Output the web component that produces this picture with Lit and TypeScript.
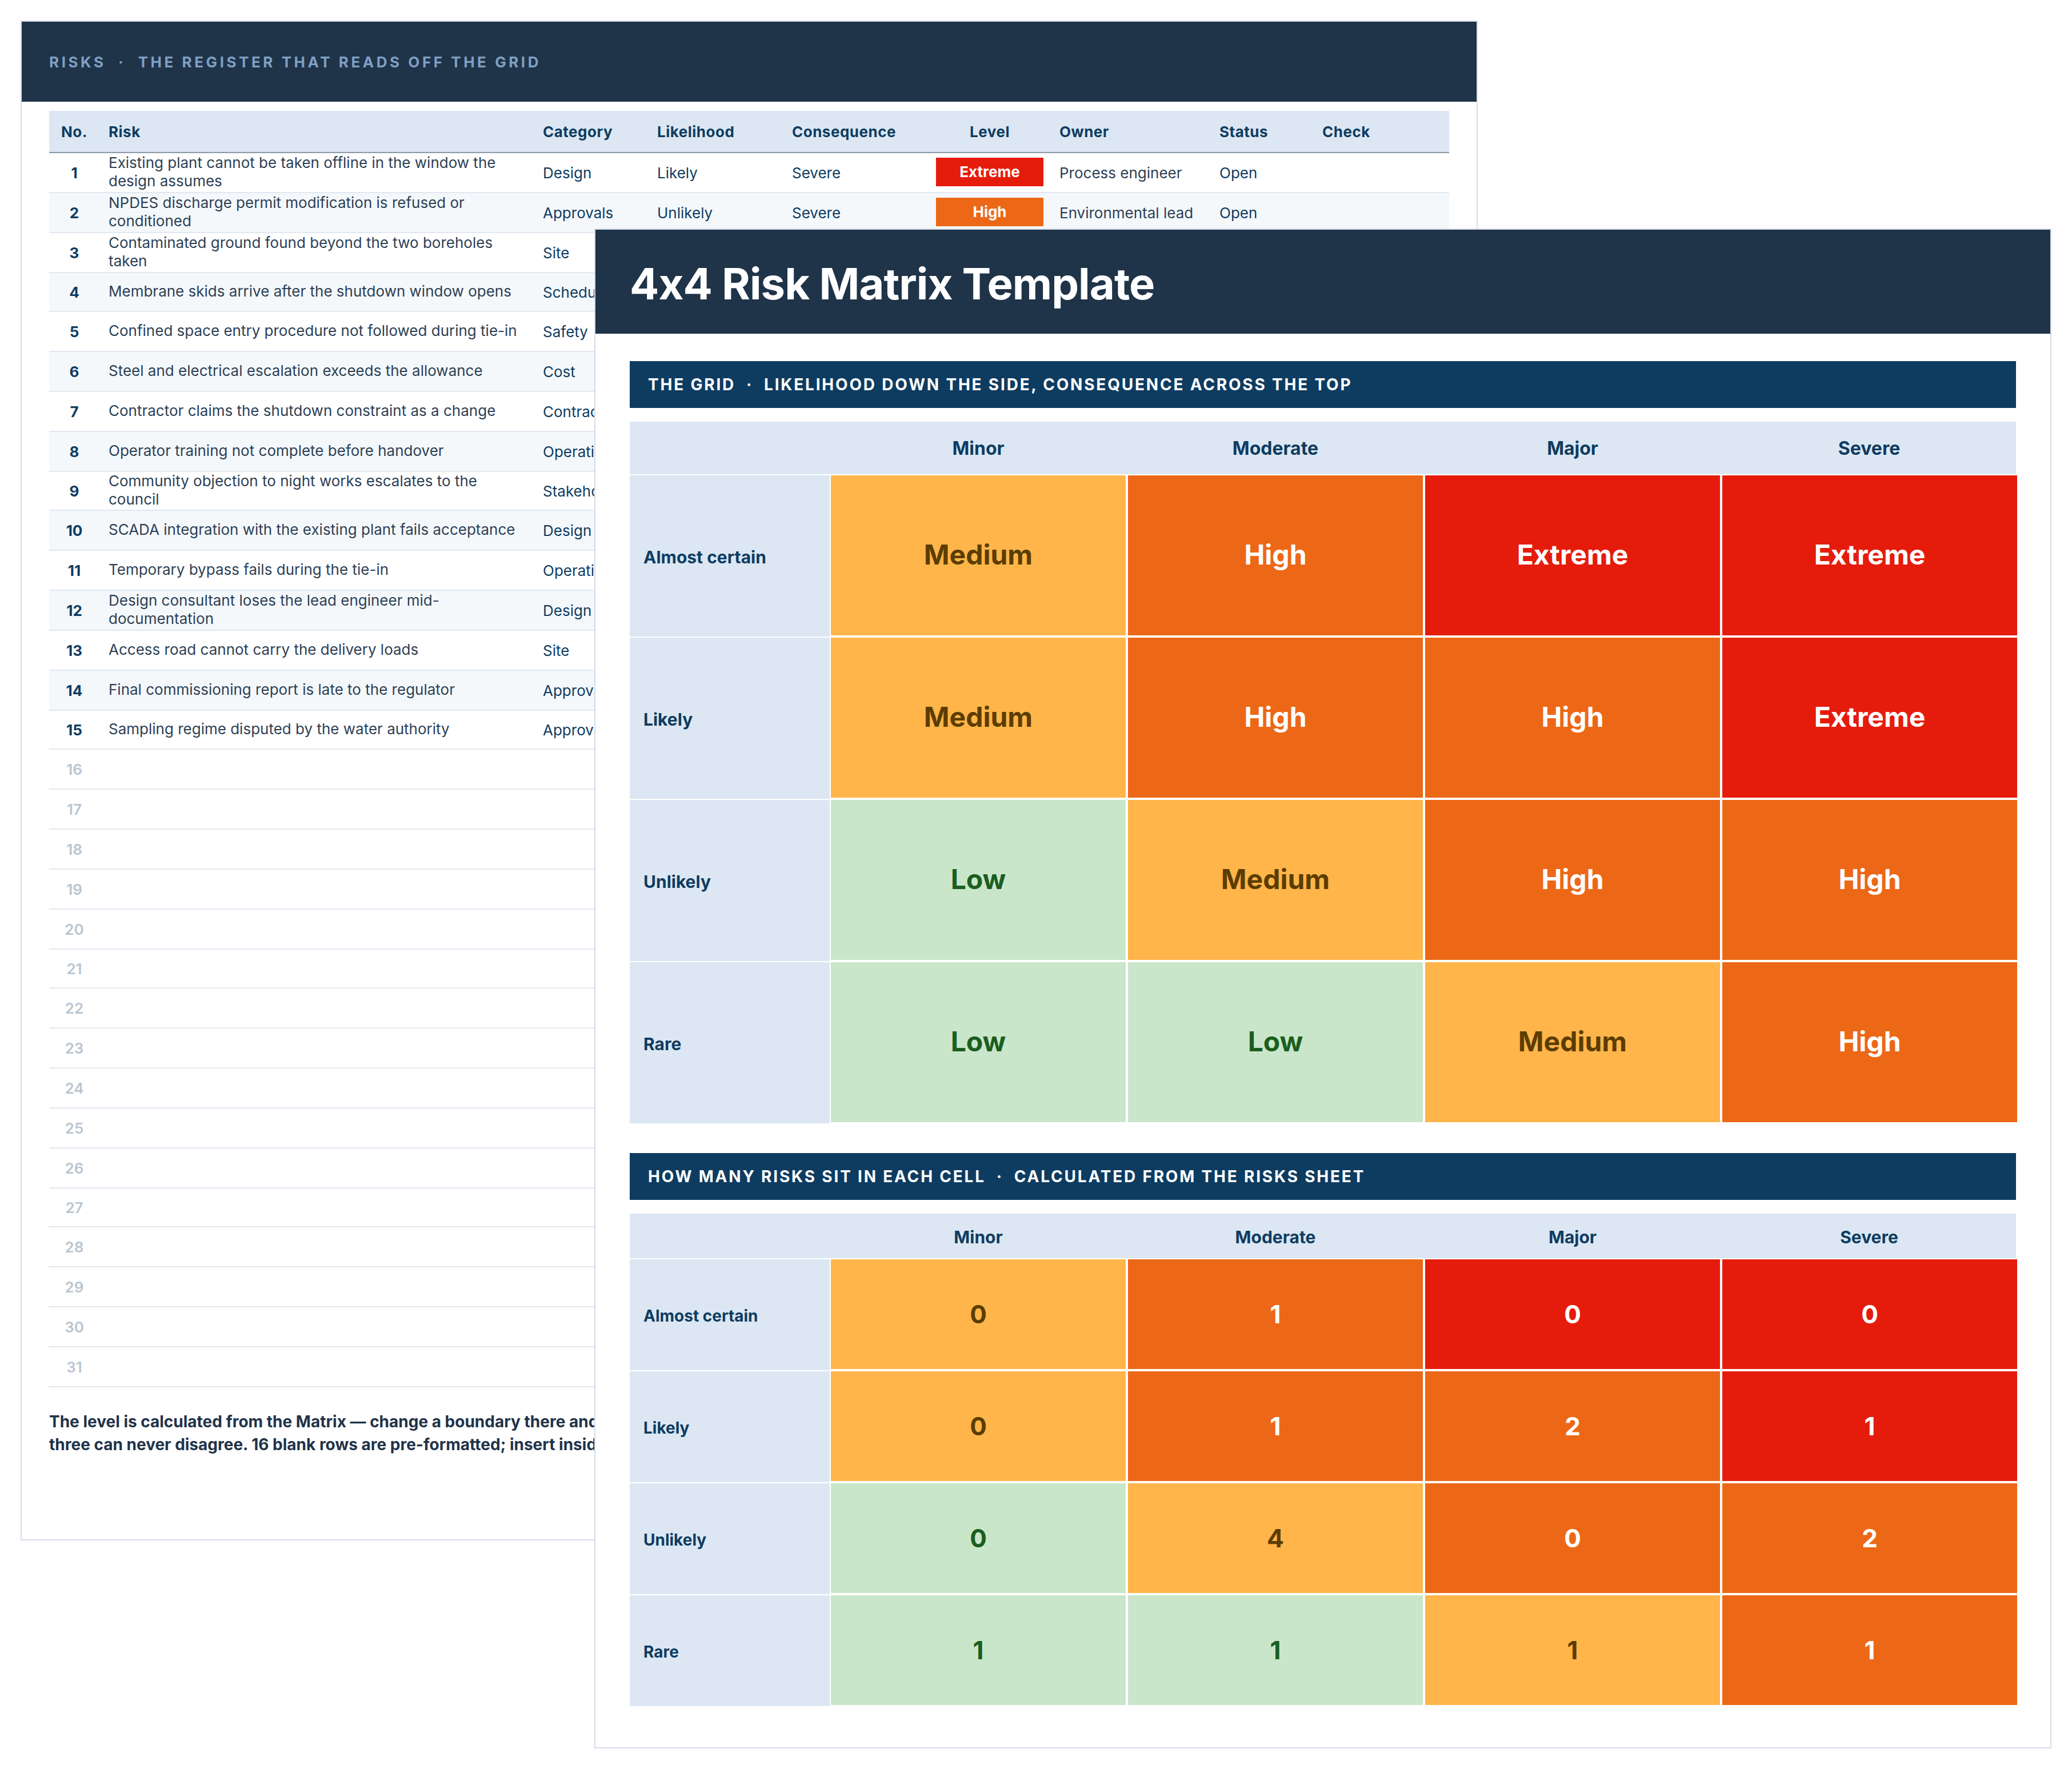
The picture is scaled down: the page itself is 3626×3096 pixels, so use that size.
import { LitElement, html, css } from "lit";
import { customElement } from "lit/decorators.js";

type Level = "Low" | "Medium" | "High" | "Extreme";

const LIKELIHOOD = ["Almost certain", "Likely", "Unlikely", "Rare"];
const CONSEQUENCE = ["Minor", "Moderate", "Major", "Severe"];

const MATRIX: Level[][] = [
  ["Medium", "High", "Extreme", "Extreme"],
  ["Medium", "High", "High", "Extreme"],
  ["Low", "Medium", "High", "High"],
  ["Low", "Low", "Medium", "High"],
];

// risk, category, likelihood, consequence, owner
const RISKS: [string, string, string, string, string][] = [
  ["Existing plant cannot be taken offline in the window the design assumes", "Design", "Likely", "Severe", "Process engineer"],
  ["NPDES discharge permit modification is refused or conditioned", "Approvals", "Unlikely", "Severe", "Environmental lead"],
  ["Contaminated ground found beyond the two boreholes taken", "Site", "Likely", "Major", "Geotechnical lead"],
  ["Membrane skids arrive after the shutdown window opens", "Schedule", "Likely", "Moderate", "Procurement lead"],
  ["Confined space entry procedure not followed during tie-in", "Safety", "Rare", "Severe", "Site manager"],
  ["Steel and electrical escalation exceeds the allowance", "Cost", "Likely", "Major", "Cost manager"],
  ["Contractor claims the shutdown constraint as a change", "Contract", "Unlikely", "Moderate", "Contract manager"],
  ["Operator training not complete before handover", "Operations", "Unlikely", "Moderate", "Plant manager"],
  ["Community objection to night works escalates to the council", "Stakeholder", "Rare", "Major", "Community lead"],
  ["SCADA integration with the existing plant fails acceptance", "Design", "Unlikely", "Severe", "Controls engineer"],
  ["Temporary bypass fails during the tie-in", "Operations", "Almost certain", "Moderate", "Process engineer"],
  ["Design consultant loses the lead engineer mid-documentation", "Design", "Rare", "Moderate", "Design manager"],
  ["Access road cannot carry the delivery loads", "Site", "Unlikely", "Moderate", "Site manager"],
  ["Final commissioning report is late to the regulator", "Approvals", "Unlikely", "Moderate", "Environmental lead"],
  ["Sampling regime disputed by the water authority", "Approvals", "Rare", "Minor", "Environmental lead"],
];

const TOTAL_ROWS = 31;
// from row 3 down the matrix sheet covers everything right of the category
const UNCOVERED_ROWS = 2;
const COLUMNS = ["Category", "Likelihood", "Consequence", "Level", "Owner", "Status", "Check"];

const levelOf = (likelihood: string, consequence: string) =>
  MATRIX[LIKELIHOOD.indexOf(likelihood)][CONSEQUENCE.indexOf(consequence)];

// rows snap to even pixels, so they come out as 70 or 68
const rowBottom = (n: number) => Math.round((n * 69.655 + 0.1) / 2) * 2;

@customElement("app-root")
export class AppRoot extends LitElement {
  static override styles = css`
    :host {
      display: block;
      position: relative;
      box-sizing: border-box;
      height: 3096px;
      padding: 36px;
      background: #fff;
      font-family: Inter, "Liberation Sans", sans-serif;
      color: #1f3349;
    }

    .sheet {
      box-sizing: border-box;
      width: 2550px;
      border: 2px solid #d6dce7;
      background: #fff;
    }

    .sheet.matrix {
      position: absolute;
      left: 1040px;
      top: 400px;
      height: 2660px;
    }

    .band {
      display: flex;
      align-items: center;
      box-sizing: border-box;
      background: #1f3349;
    }

    .band.risks {
      height: 140px;
      padding-left: 48px;
      font-size: 26px;
      font-weight: 700;
      letter-spacing: 4.55px;
      color: #7fa0c2;
      white-space: pre;
    }

    .band.title {
      height: 182px;
      padding: 6px 0 0 60px;
    }

    h1 {
      margin: 0;
      font-size: 76px;
      line-height: 1;
      font-weight: 700;
      letter-spacing: -0.96px;
      color: #fff;
    }

    .register {
      padding: 16px 48px 146px;
    }

    table {
      table-layout: fixed;
      width: 2450px;
      border-collapse: separate;
      border-spacing: 0;
      font-size: 26px;
      line-height: 32px;
      color: #0e3c61;
    }

    th {
      box-sizing: border-box;
      height: 74px;
      padding: 2px 16px 0;
      background: #dce7f3;
      border-bottom: 2px solid #8b98a6;
      font-weight: 700;
      letter-spacing: 0.5px;
      text-align: left;
    }

    td {
      padding: 2px 16px 0;
      border-bottom: 2px solid #e2e8f0;
      vertical-align: middle;
    }

    tr.alt td {
      background: #f4f8fb;
    }

    th.center,
    td.center {
      text-align: center;
    }

    td.no {
      padding: 2px 0 0;
      font-weight: 700;
    }

    th.no {
      padding: 2px 0 0;
    }

    tr.blank td.no {
      font-weight: 600;
      color: #b9c5d1;
    }

    td.risk,
    td.owner {
      color: #2d3f55;
    }

    td.risk {
      padding-top: 0;
    }

    td.risk span {
      display: block;
      position: relative;
      top: -1px;
    }

    td.level {
      padding: 0 12px;
    }

    .badge {
      display: block;
      height: 50px;
      margin-top: -2px;
      line-height: 50px;
      font-weight: 700;
      text-align: center;
    }

    .note {
      margin: 40px 0 0;
      font-size: 28px;
      line-height: 40px;
      font-weight: 700;
      white-space: nowrap;
    }

    .body {
      padding: 48px 58px 0 60px;
    }

    .bar {
      display: flex;
      align-items: center;
      height: 82px;
      margin: 0 2px 24px 0;
      padding-left: 32px;
      background: #0e3c61;
      color: #fff;
      font-size: 28px;
      font-weight: 700;
      letter-spacing: 2.8px;
      white-space: pre;
    }

    .grid {
      display: grid;
      grid-template-columns: 352px repeat(3, 520px) 516px;
      margin-bottom: 50px;
      color: #0e3c61;
    }

    .grid.big {
      grid-template-rows: 94px repeat(4, 284px);
    }

    .grid.small {
      grid-template-rows: 80px repeat(4, 196px);
    }

    .grid > div {
      display: flex;
      align-items: center;
      justify-content: center;
      box-sizing: border-box;
      font-weight: 700;
    }

    .grid > .head {
      margin-bottom: 2px;
      padding-right: 4px;
      background: #dce7f3;
      font-weight: 650;
    }

    .grid > .head:nth-child(5) {
      margin-right: 2px;
      padding-right: 0;
    }

    .grid > .side {
      justify-content: flex-start;
      margin: 0 2px 2px 0;
      padding: 4px 0 0 24px;
      background: #dce7f3;
    }

    .grid > .cell {
      margin: 0 4px 4px 0;
    }

    .grid > .cell:nth-child(5n) {
      margin-right: 0;
    }

    .big .head {
      font-size: 32px;
    }
    .big .side {
      font-size: 30px;
    }
    .grid.big > .cell {
      padding-bottom: 4px;
      font-size: 48px;
    }
    .grid.small > .head {
      padding-top: 4px;
      font-size: 30px;
    }
    .small .side {
      font-size: 28px;
    }
    .small .cell {
      font-size: 44px;
    }

    .Low {
      background: #c9e6cb;
      color: #1b5e20;
    }
    .Medium {
      background: #ffb54a;
      color: #5c3d00;
    }
    .High {
      background: #ec6817;
      color: #fff;
    }
    .Extreme {
      background: #e51c0c;
      color: #fff;
    }
  `;

  private renderRegister() {
    const rows = Array.from({ length: TOTAL_ROWS }, (_, i) => i + 1);
    return html`
      <table>
        <colgroup>
          ${[88, 760, 200, 236, 256, 212, 280, 180, 238].map(
            (w) => html`<col style="width:${w}px" />`
          )}
        </colgroup>
        <thead>
          <tr>
            <th class="no center">No.</th>
            <th>Risk</th>
            ${COLUMNS.map(
              (c) => html`<th class=${c === "Level" ? "center" : ""}>${c}</th>`
            )}
          </tr>
        </thead>
        <tbody>
          ${rows.map((n) => {
            const risk = RISKS[n - 1];
            const height = rowBottom(n) - rowBottom(n - 1);
            if (!risk) {
              return html`<tr class="blank" style="height:${height}px">
                <td class="no center">${n}</td>
                ${Array.from({ length: 8 }, () => html`<td></td>`)}
              </tr>`;
            }
            const level = levelOf(risk[2], risk[3]);
            const covered = n > UNCOVERED_ROWS;
            return html`<tr class=${n % 2 ? "" : "alt"} style="height:${height}px">
              <td class="no center">${n}</td>
              <td class="risk"><span>${risk[0]}</span></td>
              <td>${risk[1]}</td>
              ${covered
                ? Array.from({ length: 6 }, () => html`<td></td>`)
                : html`
                    <td>${risk[2]}</td>
                    <td>${risk[3]}</td>
                    <td class="level"><span class="badge ${level}">${level}</span></td>
                    <td class="owner">${risk[4]}</td>
                    <td>Open</td>
                    <td></td>
                  `}
            </tr>`;
          })}
        </tbody>
      </table>
    `;
  }

  private renderGrid(size: string, value: (row: number, col: number) => string | number) {
    return html`
      <div class="grid ${size}">
        <div class="head"></div>
        ${CONSEQUENCE.map((c) => html`<div class="head">${c}</div>`)}
        ${LIKELIHOOD.map(
          (l, r) => html`
            <div class="side">${l}</div>
            ${CONSEQUENCE.map(
              (_, c) => html`<div class="cell ${MATRIX[r][c]}">${value(r, c)}</div>`
            )}
          `
        )}
      </div>
    `;
  }

  override render() {
    const counts = MATRIX.map((row) => row.map(() => 0));
    RISKS.forEach((r) => {
      counts[LIKELIHOOD.indexOf(r[2])][CONSEQUENCE.indexOf(r[3])]++;
    });
    return html`
      <section class="sheet">
        <div class="band risks">RISKS  ·  THE REGISTER THAT READS OFF THE GRID</div>
        <div class="register">
          ${this.renderRegister()}
          <p class="note">
            The level is calculated from the Matrix — change a boundary there and<br />
            three can never disagree. 16 blank rows are pre-formatted; insert inside
          </p>
        </div>
      </section>
      <section class="sheet matrix">
        <div class="band title"><h1>4x4 Risk Matrix Template</h1></div>
        <div class="body">
          <div class="bar">THE GRID  ·  LIKELIHOOD DOWN THE SIDE, CONSEQUENCE ACROSS THE TOP</div>
          ${this.renderGrid("big", (r, c) => MATRIX[r][c])}
          <div class="bar">HOW MANY RISKS SIT IN EACH CELL  ·  CALCULATED FROM THE RISKS SHEET</div>
          ${this.renderGrid("small", (r, c) => counts[r][c])}
        </div>
      </section>
    `;
  }
}
